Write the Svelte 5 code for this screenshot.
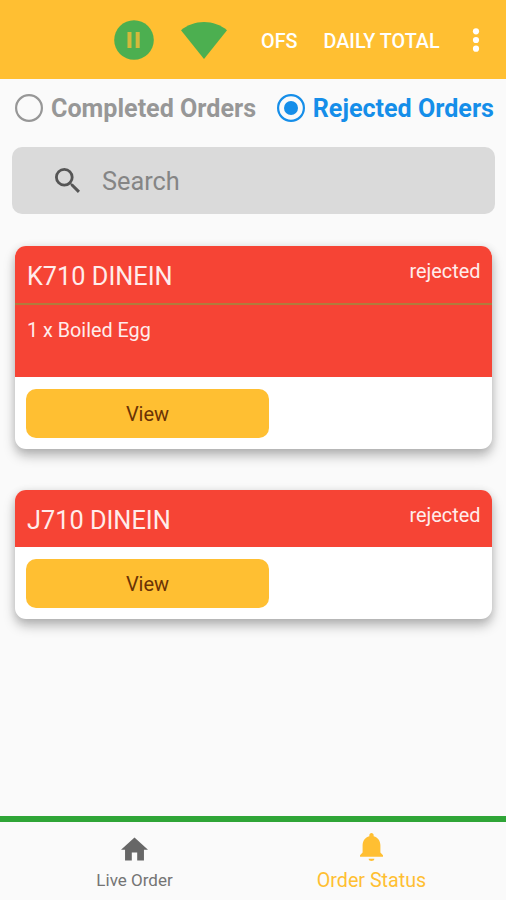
<script lang="ts">
	type Order = { id: string; status: string; items: string[] };

	const filters = ['Completed Orders', 'Rejected Orders'];
	let filter = $state('Rejected Orders');
	let search = $state('');

	const orders: Order[] = [
		{ id: 'K710 DINEIN', status: 'rejected', items: ['1 x Boiled Egg'] },
		{ id: 'J710 DINEIN', status: 'rejected', items: [] }
	];
</script>

<div class="app">
	<header>
		<svg class="pause" viewBox="0 0 40 40">
			<circle cx="20" cy="20" r="19.800" />
			<path d="M13.500 12h4v16h-4zM21.700 12h4v16h-4z" />
		</svg>
		<svg class="wifi" viewBox="0 0 46 37">
			<path d="M23 37 0 8.200C6.500 3 14.200 0 23 0s16.500 3 23 8.200z" />
		</svg>
		<span class="action ofs">OFS</span>
		<span class="action">DAILY TOTAL</span>
		<svg class="more" viewBox="0 0 8 24">
			<circle cx="4" cy="3.300" r="3.100" />
			<circle cx="4" cy="12" r="3.100" />
			<circle cx="4" cy="20.700" r="3.100" />
		</svg>
	</header>

	<div class="filters">
		{#each filters as name}
			<button class="filter" class:selected={filter === name} onclick={() => (filter = name)}>
				<svg viewBox="0 0 28 28">
					<circle cx="14" cy="14" r="12.900" fill="none" stroke="currentColor" stroke-width="2.200" />
					{#if filter === name}
						<circle cx="14" cy="14" r="7" fill="currentColor" />
					{/if}
				</svg>
				<span>{name}</span>
			</button>
		{/each}
	</div>

	<label class="search">
		<svg viewBox="3 3 17.490 17.490">
			<path
				d="M15.500 14h-.79l-.28-.27A6.471 6.471 0 0 0 16 9.500 6.500 6.500 0 1 0 9.500 16c1.610 0 3.090-.59 4.230-1.570l.27.28v.79l5 4.990L20.490 19l-4.990-5zm-6 0C7.010 14 5 11.990 5 9.500S7.010 5 9.500 5 14 7.010 14 9.500 11.990 14 9.500 14z"
			/>
		</svg>
		<input type="text" placeholder="Search" bind:value={search} />
	</label>

	<main>
		{#each orders as order}
			<article>
				<div class="title">
					<h2>{order.id}</h2>
					<span>{order.status}</span>
				</div>
				{#if order.items.length}
					<div class="items">
						{#each order.items as item}
							<p>{item}</p>
						{/each}
					</div>
				{/if}
				<button class="view">View</button>
			</article>
		{/each}
	</main>

	<nav>
		<a class="live" href="#live">
			<svg viewBox="2 3 20 17"><path d="M10 20v-6h4v6h5v-8h3L12 3 2 12h3v8z" /></svg>
			Live Order
		</a>
		<a class="current" href="#status">
			<svg viewBox="4 2.500 16 19.500">
				<path
					d="M12 22c1.100 0 2-.7 2-1.600h-4c0 .9.890 1.600 2 1.600zm6.200-6v-5c0-3.070-1.740-5.640-4.700-6.320V4c0-.83-.67-1.500-1.500-1.500s-1.500.67-1.500 1.500v.68C7.530 5.360 5.800 7.920 5.800 11v5L4 18v1h16v-1z"
				/>
			</svg>
			Order Status
		</a>
	</nav>
</div>

<style>
	:global(body) {
		margin: 0;
	}

	.app {
		box-sizing: border-box;
		display: flex;
		flex-direction: column;
		height: 900px;
		overflow: hidden;
		background: #fafafa;
		font-family: Roboto, sans-serif;
	}

	svg {
		display: block;
		flex: none;
	}

	button {
		border: 0;
		padding: 0;
		background: none;
		font-family: inherit;
		cursor: pointer;
	}

	header {
		box-sizing: border-box;
		flex: none;
		display: flex;
		align-items: center;
		height: 79px;
		padding: 1px 26px 0 114px;
		background: #ffbf32;
		color: #fff;
	}

	.pause {
		width: 40px;
		height: 40px;
		fill: #4caf50;
	}

	.pause path {
		fill: #d3b93b;
	}

	.wifi {
		width: 46px;
		height: 37px;
		margin-left: 27px;
		fill: #4caf50;
	}

	.action {
		padding-top: 3px;
		font-size: 19.800px;
		font-weight: 500;
		line-height: 24px;
		white-space: nowrap;
	}

	.ofs {
		margin: 0 26px 0 34px;
	}

	.more {
		width: 8px;
		height: 24px;
		margin-left: auto;
		fill: #fff;
	}

	.filters {
		flex: none;
		display: flex;
		justify-content: space-between;
		height: 57px;
		padding: 0 12px 0 15px;
	}

	.filter {
		display: flex;
		align-items: center;
		gap: 8px;
		color: #979797;
		font-size: 25.100px;
		font-weight: 700;
		white-space: nowrap;
	}

	.filter span {
		padding-top: 2px;
	}

	.filter svg {
		width: 28px;
		height: 28px;
	}

	.selected {
		color: #158ee9;
	}

	.search {
		box-sizing: border-box;
		flex: none;
		display: flex;
		align-items: center;
		gap: 22px;
		height: 67px;
		margin: 11px 11px 0 12px;
		padding-left: 43px;
		border-radius: 10px;
		background: #dadada;
	}

	.search svg {
		width: 25px;
		height: 25px;
		fill: #555;
	}

	.search input {
		flex: 1;
		min-width: 0;
		border: 0;
		padding: 2px 0 0;
		outline: 0;
		background: none;
		color: #555;
		font: 25.300px Roboto, sans-serif;
	}

	.search input::placeholder {
		color: #858585;
	}

	main {
		flex: 1;
		display: flex;
		flex-direction: column;
		gap: 41px;
		padding: 32px 14px 0 15px;
	}

	article {
		overflow: hidden;
		border-radius: 11px;
		background: #fff;
		box-shadow: 0 7px 12px rgba(0, 0, 0, 0.26), 0 1px 8px rgba(0, 0, 0, 0.1);
	}

	.title {
		box-sizing: border-box;
		display: flex;
		justify-content: space-between;
		height: 57px;
		padding: 14px 11.500px 0 12px;
		background: #f64435;
		color: #ffeceb;
	}

	.title h2 {
		margin: 1px 0 0;
		font-size: 25.300px;
		font-weight: 400;
		line-height: 32px;
	}

	.title span {
		font-size: 19.900px;
		line-height: 23px;
	}

	.items {
		box-sizing: border-box;
		height: 74px;
		padding: 14px 12px 0;
		border-top: 2px solid #b17b3c;
		background: #f64435;
		color: #ffeceb;
	}

	.items p {
		margin: 0;
		font-size: 19.800px;
		line-height: 24px;
	}

	.view {
		display: block;
		width: 243px;
		height: 49px;
		margin: 12px 0 11px 11px;
		border-radius: 10px;
		background: #ffbf32;
		color: #6b3305;
		font-size: 20px;
	}

	nav {
		box-sizing: border-box;
		flex: none;
		display: flex;
		height: 84px;
		padding: 0 16px;
		border-top: 6px solid #2fa537;
	}

	nav a {
		flex: 1;
		display: flex;
		flex-direction: column;
		align-items: center;
		text-decoration: none;
	}

	.live {
		color: #747474;
		font-size: 17px;
		line-height: 20px;
	}

	.current {
		color: #ffbf32;
		font-size: 19.700px;
		line-height: 24px;
	}

	nav svg {
		fill: currentColor;
	}

	.live svg {
		width: 27px;
		height: 24px;
		margin: 15px 0 9px;
		fill: #676767;
	}

	.current svg {
		width: 23px;
		height: 28px;
		margin: 11px 0 8px;
	}
</style>
